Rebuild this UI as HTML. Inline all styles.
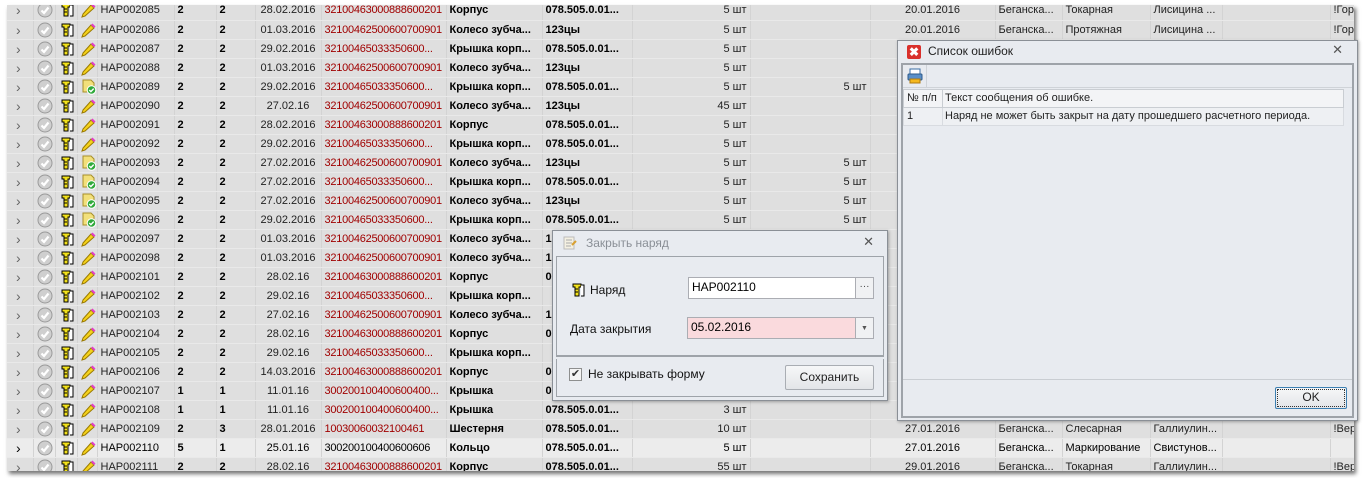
<!DOCTYPE html>
<html><head><meta charset="utf-8">
<style>
*{margin:0;padding:0;box-sizing:border-box}
body{width:1363px;height:478px;background:#fff;overflow:hidden;position:relative;font-family:"Liberation Sans",sans-serif;font-size:11px;color:#222}
#wrap{position:absolute;left:7px;top:5px;width:1347px;height:466px;overflow:hidden;background:#dfdfdf;box-shadow:2px 3px 4px rgba(0,0,0,.55)}
table{position:absolute;top:-4px;left:0;border-collapse:collapse;table-layout:fixed;width:1347px}
td{height:19px;border-right:1px solid #d3d3d3;border-bottom:1px solid #e9e9e9;white-space:nowrap;overflow:hidden;padding:0 3px;line-height:18px}
td.b{font-weight:bold;color:#000}
td.r{color:#a00000;letter-spacing:-0.25px}
td.q{text-align:right}
td.c{text-align:center}
tr.sel td{background:#ececec;color:#000}
svg.i{display:block;margin:0 auto}
.arr{color:#666;font-size:14px;padding-left:9px;line-height:16px}
.dlg{position:absolute;background:#e8ebf0;border:1px solid #8a8f96;box-shadow:1px 1px 3px rgba(0,0,0,.3)}
.btn{position:absolute;border:1px solid #a9adb3;border-radius:2px;background:linear-gradient(#f6f7f8,#e3e5e8);text-align:center;font-size:12px;color:#222}
.inp{position:absolute;border:1px solid #abadb3;background:#fff;font-size:12px;padding-left:3px;line-height:19px;color:#000}
</style></head><body>
<svg width="0" height="0" style="position:absolute">
<defs>
<symbol id="ck" viewBox="0 0 16 16"><circle cx="8" cy="8" r="7" fill="#cfcfcf" stroke="#9a9a9a"/><path d="M4.5 8.5l2.5 2.5 4.5-5.5" stroke="#fff" stroke-width="2.2" fill="none"/></symbol>
<symbol id="tl" viewBox="0 0 16 16"><path d="M3 2h8v3h-2v9h-4v-9h-2z" fill="#f3e21b" stroke="#000" stroke-width="1"/><path d="M11 3h3v11h-3" fill="#fff" stroke="#000"/><path d="M5 7h3M5 10h3" stroke="#000"/></symbol>
<symbol id="pn" viewBox="0 0 16 16"><path d="M2 12l8-9 3 3-9 8-3 1z" fill="#f5d21c" stroke="#9a7a00"/><path d="M10 3l1.5-1.5 3 3-1.5 1.5z" fill="#e33ec8"/></symbol>
<symbol id="gd" viewBox="0 0 16 16"><path d="M2 1h8l3 3v9h-11z" fill="#f2e07a" stroke="#a88f2a"/><circle cx="10.5" cy="11" r="4.3" fill="#2fa93a" stroke="#fff"/><path d="M8.3 11l1.6 1.6 2.8-3" stroke="#fff" stroke-width="1.4" fill="none"/></symbol>
</defs></svg>
<div id="wrap">
<table>
<colgroup><col style="width:26px"><col style="width:22px"><col style="width:22px"><col style="width:20px"><col style="width:77px"><col style="width:42px"><col style="width:39px"><col style="width:66px"><col style="width:125px"><col style="width:96px"><col style="width:90px"><col style="width:118px"><col style="width:120px"><col style="width:125px"><col style="width:67px"><col style="width:88px"><col style="width:72px"><col style="width:108px"><col style="width:24px"></colgroup>
<tbody>
<tr><td class="arr">›</td><td><svg class="i" width="16" height="16"><use href="#ck"/></svg></td><td><svg class="i" width="16" height="16"><use href="#tl"/></svg></td><td><svg class="i" width="16" height="16"><use href="#pn"/></svg></td><td>HAP002085</td><td class="b">2</td><td class="b">2</td><td class="c">28.02.2016</td><td class="r">32100463000888600201</td><td class="b">Корпус</td><td class="b">078.505.0.01...</td><td class="q">5 шт</td><td class="q"></td><td class="c">20.01.2016</td><td>Беганска...</td><td>Токарная</td><td>Лисицина ...</td><td></td><td>!Гор</td></tr>
<tr><td class="arr">›</td><td><svg class="i" width="16" height="16"><use href="#ck"/></svg></td><td><svg class="i" width="16" height="16"><use href="#tl"/></svg></td><td><svg class="i" width="16" height="16"><use href="#pn"/></svg></td><td>HAP002086</td><td class="b">2</td><td class="b">2</td><td class="c">01.03.2016</td><td class="r">32100462500600700901</td><td class="b">Колесо зубча...</td><td class="b">123цы</td><td class="q">5 шт</td><td class="q"></td><td class="c">20.01.2016</td><td>Беганска...</td><td>Протяжная</td><td>Лисицина ...</td><td></td><td>!Гор</td></tr>
<tr><td class="arr">›</td><td><svg class="i" width="16" height="16"><use href="#ck"/></svg></td><td><svg class="i" width="16" height="16"><use href="#tl"/></svg></td><td><svg class="i" width="16" height="16"><use href="#pn"/></svg></td><td>HAP002087</td><td class="b">2</td><td class="b">2</td><td class="c">29.02.2016</td><td class="r">32100465033350600...</td><td class="b">Крышка корп...</td><td class="b">078.505.0.01...</td><td class="q">5 шт</td><td class="q"></td><td></td><td></td><td></td><td></td><td></td><td></td></tr>
<tr><td class="arr">›</td><td><svg class="i" width="16" height="16"><use href="#ck"/></svg></td><td><svg class="i" width="16" height="16"><use href="#tl"/></svg></td><td><svg class="i" width="16" height="16"><use href="#pn"/></svg></td><td>HAP002088</td><td class="b">2</td><td class="b">2</td><td class="c">01.03.2016</td><td class="r">32100462500600700901</td><td class="b">Колесо зубча...</td><td class="b">123цы</td><td class="q">5 шт</td><td class="q"></td><td></td><td></td><td></td><td></td><td></td><td></td></tr>
<tr><td class="arr">›</td><td><svg class="i" width="16" height="16"><use href="#ck"/></svg></td><td><svg class="i" width="16" height="16"><use href="#tl"/></svg></td><td><svg class="i" width="16" height="16"><use href="#gd"/></svg></td><td>HAP002089</td><td class="b">2</td><td class="b">2</td><td class="c">29.02.2016</td><td class="r">32100465033350600...</td><td class="b">Крышка корп...</td><td class="b">078.505.0.01...</td><td class="q">5 шт</td><td class="q">5 шт</td><td></td><td></td><td></td><td></td><td></td><td></td></tr>
<tr><td class="arr">›</td><td><svg class="i" width="16" height="16"><use href="#ck"/></svg></td><td><svg class="i" width="16" height="16"><use href="#tl"/></svg></td><td><svg class="i" width="16" height="16"><use href="#pn"/></svg></td><td>HAP002090</td><td class="b">2</td><td class="b">2</td><td class="c">27.02.16</td><td class="r">32100462500600700901</td><td class="b">Колесо зубча...</td><td class="b">123цы</td><td class="q">45 шт</td><td class="q"></td><td></td><td></td><td></td><td></td><td></td><td></td></tr>
<tr><td class="arr">›</td><td><svg class="i" width="16" height="16"><use href="#ck"/></svg></td><td><svg class="i" width="16" height="16"><use href="#tl"/></svg></td><td><svg class="i" width="16" height="16"><use href="#pn"/></svg></td><td>HAP002091</td><td class="b">2</td><td class="b">2</td><td class="c">28.02.2016</td><td class="r">32100463000888600201</td><td class="b">Корпус</td><td class="b">078.505.0.01...</td><td class="q">5 шт</td><td class="q"></td><td></td><td></td><td></td><td></td><td></td><td></td></tr>
<tr><td class="arr">›</td><td><svg class="i" width="16" height="16"><use href="#ck"/></svg></td><td><svg class="i" width="16" height="16"><use href="#tl"/></svg></td><td><svg class="i" width="16" height="16"><use href="#pn"/></svg></td><td>HAP002092</td><td class="b">2</td><td class="b">2</td><td class="c">29.02.2016</td><td class="r">32100465033350600...</td><td class="b">Крышка корп...</td><td class="b">078.505.0.01...</td><td class="q">5 шт</td><td class="q"></td><td></td><td></td><td></td><td></td><td></td><td></td></tr>
<tr><td class="arr">›</td><td><svg class="i" width="16" height="16"><use href="#ck"/></svg></td><td><svg class="i" width="16" height="16"><use href="#tl"/></svg></td><td><svg class="i" width="16" height="16"><use href="#gd"/></svg></td><td>HAP002093</td><td class="b">2</td><td class="b">2</td><td class="c">27.02.2016</td><td class="r">32100462500600700901</td><td class="b">Колесо зубча...</td><td class="b">123цы</td><td class="q">5 шт</td><td class="q">5 шт</td><td></td><td></td><td></td><td></td><td></td><td></td></tr>
<tr><td class="arr">›</td><td><svg class="i" width="16" height="16"><use href="#ck"/></svg></td><td><svg class="i" width="16" height="16"><use href="#tl"/></svg></td><td><svg class="i" width="16" height="16"><use href="#gd"/></svg></td><td>HAP002094</td><td class="b">2</td><td class="b">2</td><td class="c">27.02.2016</td><td class="r">32100465033350600...</td><td class="b">Крышка корп...</td><td class="b">078.505.0.01...</td><td class="q">5 шт</td><td class="q">5 шт</td><td></td><td></td><td></td><td></td><td></td><td></td></tr>
<tr><td class="arr">›</td><td><svg class="i" width="16" height="16"><use href="#ck"/></svg></td><td><svg class="i" width="16" height="16"><use href="#tl"/></svg></td><td><svg class="i" width="16" height="16"><use href="#gd"/></svg></td><td>HAP002095</td><td class="b">2</td><td class="b">2</td><td class="c">27.02.2016</td><td class="r">32100462500600700901</td><td class="b">Колесо зубча...</td><td class="b">123цы</td><td class="q">5 шт</td><td class="q">5 шт</td><td></td><td></td><td></td><td></td><td></td><td></td></tr>
<tr><td class="arr">›</td><td><svg class="i" width="16" height="16"><use href="#ck"/></svg></td><td><svg class="i" width="16" height="16"><use href="#tl"/></svg></td><td><svg class="i" width="16" height="16"><use href="#gd"/></svg></td><td>HAP002096</td><td class="b">2</td><td class="b">2</td><td class="c">29.02.2016</td><td class="r">32100465033350600...</td><td class="b">Крышка корп...</td><td class="b">078.505.0.01...</td><td class="q">5 шт</td><td class="q">5 шт</td><td></td><td></td><td></td><td></td><td></td><td></td></tr>
<tr><td class="arr">›</td><td><svg class="i" width="16" height="16"><use href="#ck"/></svg></td><td><svg class="i" width="16" height="16"><use href="#tl"/></svg></td><td><svg class="i" width="16" height="16"><use href="#pn"/></svg></td><td>HAP002097</td><td class="b">2</td><td class="b">2</td><td class="c">01.03.2016</td><td class="r">32100462500600700901</td><td class="b">Колесо зубча...</td><td class="b">123цы</td><td class="q">5 шт</td><td class="q"></td><td></td><td></td><td></td><td></td><td></td><td></td></tr>
<tr><td class="arr">›</td><td><svg class="i" width="16" height="16"><use href="#ck"/></svg></td><td><svg class="i" width="16" height="16"><use href="#tl"/></svg></td><td><svg class="i" width="16" height="16"><use href="#pn"/></svg></td><td>HAP002098</td><td class="b">2</td><td class="b">2</td><td class="c">01.03.2016</td><td class="r">32100462500600700901</td><td class="b">Колесо зубча...</td><td class="b">123цы</td><td class="q">5 шт</td><td class="q"></td><td></td><td></td><td></td><td></td><td></td><td></td></tr>
<tr><td class="arr">›</td><td><svg class="i" width="16" height="16"><use href="#ck"/></svg></td><td><svg class="i" width="16" height="16"><use href="#tl"/></svg></td><td><svg class="i" width="16" height="16"><use href="#pn"/></svg></td><td>HAP002101</td><td class="b">2</td><td class="b">2</td><td class="c">28.02.16</td><td class="r">32100463000888600201</td><td class="b">Корпус</td><td class="b">0</td><td class="q"></td><td class="q"></td><td></td><td></td><td></td><td></td><td></td><td></td></tr>
<tr><td class="arr">›</td><td><svg class="i" width="16" height="16"><use href="#ck"/></svg></td><td><svg class="i" width="16" height="16"><use href="#tl"/></svg></td><td><svg class="i" width="16" height="16"><use href="#pn"/></svg></td><td>HAP002102</td><td class="b">2</td><td class="b">2</td><td class="c">29.02.16</td><td class="r">32100465033350600...</td><td class="b">Крышка корп...</td><td class="b"></td><td class="q"></td><td class="q"></td><td></td><td></td><td></td><td></td><td></td><td></td></tr>
<tr><td class="arr">›</td><td><svg class="i" width="16" height="16"><use href="#ck"/></svg></td><td><svg class="i" width="16" height="16"><use href="#tl"/></svg></td><td><svg class="i" width="16" height="16"><use href="#pn"/></svg></td><td>HAP002103</td><td class="b">2</td><td class="b">2</td><td class="c">27.02.16</td><td class="r">32100462500600700901</td><td class="b">Колесо зубча...</td><td class="b">1</td><td class="q"></td><td class="q"></td><td></td><td></td><td></td><td></td><td></td><td></td></tr>
<tr><td class="arr">›</td><td><svg class="i" width="16" height="16"><use href="#ck"/></svg></td><td><svg class="i" width="16" height="16"><use href="#tl"/></svg></td><td><svg class="i" width="16" height="16"><use href="#pn"/></svg></td><td>HAP002104</td><td class="b">2</td><td class="b">2</td><td class="c">28.02.16</td><td class="r">32100463000888600201</td><td class="b">Корпус</td><td class="b">0</td><td class="q"></td><td class="q"></td><td></td><td></td><td></td><td></td><td></td><td></td></tr>
<tr><td class="arr">›</td><td><svg class="i" width="16" height="16"><use href="#ck"/></svg></td><td><svg class="i" width="16" height="16"><use href="#tl"/></svg></td><td><svg class="i" width="16" height="16"><use href="#pn"/></svg></td><td>HAP002105</td><td class="b">2</td><td class="b">2</td><td class="c">29.02.16</td><td class="r">32100465033350600...</td><td class="b">Крышка корп...</td><td class="b"></td><td class="q"></td><td class="q"></td><td></td><td></td><td></td><td></td><td></td><td></td></tr>
<tr><td class="arr">›</td><td><svg class="i" width="16" height="16"><use href="#ck"/></svg></td><td><svg class="i" width="16" height="16"><use href="#tl"/></svg></td><td><svg class="i" width="16" height="16"><use href="#pn"/></svg></td><td>HAP002106</td><td class="b">2</td><td class="b">2</td><td class="c">14.03.2016</td><td class="r">32100463000888600201</td><td class="b">Корпус</td><td class="b">0</td><td class="q"></td><td class="q"></td><td></td><td></td><td></td><td></td><td></td><td></td></tr>
<tr><td class="arr">›</td><td><svg class="i" width="16" height="16"><use href="#ck"/></svg></td><td><svg class="i" width="16" height="16"><use href="#tl"/></svg></td><td><svg class="i" width="16" height="16"><use href="#pn"/></svg></td><td>HAP002107</td><td class="b">1</td><td class="b">1</td><td class="c">11.01.16</td><td class="r">300200100400600400...</td><td class="b">Крышка</td><td class="b">0</td><td class="q"></td><td class="q"></td><td></td><td></td><td></td><td></td><td></td><td></td></tr>
<tr><td class="arr">›</td><td><svg class="i" width="16" height="16"><use href="#ck"/></svg></td><td><svg class="i" width="16" height="16"><use href="#tl"/></svg></td><td><svg class="i" width="16" height="16"><use href="#pn"/></svg></td><td>HAP002108</td><td class="b">1</td><td class="b">1</td><td class="c">11.01.16</td><td class="r">300200100400600400...</td><td class="b">Крышка</td><td class="b">078.505.0.01...</td><td class="q">3 шт</td><td class="q"></td><td></td><td></td><td></td><td></td><td></td><td></td></tr>
<tr><td class="arr">›</td><td><svg class="i" width="16" height="16"><use href="#ck"/></svg></td><td><svg class="i" width="16" height="16"><use href="#tl"/></svg></td><td><svg class="i" width="16" height="16"><use href="#pn"/></svg></td><td>HAP002109</td><td class="b">2</td><td class="b">3</td><td class="c">28.01.2016</td><td class="r">10030060032100461</td><td class="b">Шестерня</td><td class="b">078.505.0.01...</td><td class="q">10 шт</td><td class="q"></td><td class="c">27.01.2016</td><td>Беганска...</td><td>Слесарная</td><td>Галлиулин...</td><td></td><td>!Вер</td></tr>
<tr class="sel"><td class="arr">›</td><td><svg class="i" width="16" height="16"><use href="#ck"/></svg></td><td><svg class="i" width="16" height="16"><use href="#tl"/></svg></td><td><svg class="i" width="16" height="16"><use href="#pn"/></svg></td><td>HAP002110</td><td class="b">5</td><td class="b">1</td><td class="c">25.01.16</td><td style="letter-spacing:-0.25px">300200100400600606</td><td class="b">Кольцо</td><td class="b">078.505.0.01...</td><td class="q">5 шт</td><td class="q"></td><td class="c">27.01.2016</td><td>Беганска...</td><td>Маркирование</td><td>Свистунов...</td><td></td><td></td></tr>
<tr><td class="arr">›</td><td><svg class="i" width="16" height="16"><use href="#ck"/></svg></td><td><svg class="i" width="16" height="16"><use href="#tl"/></svg></td><td><svg class="i" width="16" height="16"><use href="#pn"/></svg></td><td>HAP002111</td><td class="b">2</td><td class="b">2</td><td class="c">28.02.16</td><td class="r">32100463000888600201</td><td class="b">Корпус</td><td class="b">078.505.0.01...</td><td class="q">55 шт</td><td class="q"></td><td class="c">29.01.2016</td><td>Беганска...</td><td>Токарная</td><td>Галлиулин...</td><td></td><td>!Вер</td></tr>
</tbody></table>
</div>

<div class="dlg" style="left:897px;top:40px;width:461px;height:381px;background:#e8ebf0">
  <div style="position:absolute;left:9px;top:4px;width:14px;height:14px;background:#d9302c;border-radius:2px;color:#fff;font-size:12px;line-height:14px;text-align:center;font-weight:bold">✖</div>
  <div style="position:absolute;left:30px;top:3px;font-size:12px;color:#222">Список ошибок</div>
  <div style="position:absolute;right:14px;top:1px;font-size:13px;color:#555">✕</div>
  <div style="position:absolute;left:3px;top:22px;width:453px;height:355px;border:2px solid #9ea3a9;background:#e8ebf0">
    <div style="position:absolute;left:0;top:0;right:0;height:23px;border-bottom:1px solid #cfd3d8">
      <svg style="position:absolute;left:4px;top:3px" width="16" height="16" viewBox="0 0 16 16"><rect x="3" y="1" width="10" height="5" fill="#fff" stroke="#3a6ea5"/><rect x="1" y="6" width="14" height="6" rx="1" fill="#5a8fc8" stroke="#2d5a8a"/><rect x="3" y="11" width="10" height="4" fill="#f5b81d" stroke="#b07a10"/></svg>
      <div style="position:absolute;left:23px;top:0;width:1px;height:23px;background:#cfd3d8"></div>
    </div>
    <div style="position:absolute;left:0;top:24px;width:441px;height:19px;background:#f3f4f6;border:1px solid #c9cdd2;font-size:11px;line-height:17px">
      <span style="position:absolute;left:3px">№ п/п</span><span style="position:absolute;left:38px;top:0;height:17px;border-left:1px solid #c9cdd2"></span><span style="position:absolute;left:41px">Текст сообщения об ошибке.</span>
    </div>
    <div style="position:absolute;left:0;top:43px;width:441px;height:18px;background:#eef0f3;border:1px solid #d8dbe0;border-top:0;font-size:11px;line-height:17px">
      <span style="position:absolute;left:3px">1</span><span style="position:absolute;left:38px;top:0;height:17px;border-left:1px solid #d8dbe0"></span><span style="position:absolute;left:41px">Наряд не может быть закрыт на дату прошедшего расчетного периода.</span>
    </div>
    <div style="position:absolute;left:0;top:314px;right:0;border-top:1px solid #c9cdd2"></div>
    <div class="btn" style="left:372px;top:322px;width:72px;height:22px;line-height:19px;border:1px solid #3c7fb1;outline:1px dotted #333;outline-offset:-3px">OK</div>
  </div>
</div>

<div class="dlg" style="left:552px;top:230px;width:336px;height:171px;background:#e8ebf0">
  <svg style="position:absolute;left:10px;top:5px" width="14" height="14" viewBox="0 0 14 14"><rect x="1" y="1" width="10" height="12" fill="#f4f0e2" stroke="#bbb"/><path d="M3 4h6M3 7h6M3 10h5" stroke="#aaa"/><path d="M9 9l4-4" stroke="#d8a030" stroke-width="2"/></svg>
  <div style="position:absolute;left:33px;top:5px;font-size:12px;color:#8a8f96">Закрыть наряд</div>
  <div style="position:absolute;right:13px;top:3px;font-size:13px;color:#555">✕</div>
  <div style="position:absolute;left:3px;top:25px;width:328px;height:101px;border:1px solid #9ea3a9;border-bottom:2px solid #9ea3a9;background:#e8ebf0">
    <svg style="position:absolute;left:13px;top:25px" width="16" height="16"><use href="#tl"/></svg>
    <div style="position:absolute;left:33px;top:26px;font-size:12px;color:#111">Наряд</div>
    <div class="inp" style="left:131px;top:20px;width:168px;height:22px">HAP002110</div>
    <div style="position:absolute;left:299px;top:20px;width:18px;height:22px;border:1px solid #abadb3;border-left:0;background:#f0f1f3;font-size:10px;text-align:center;line-height:18px;color:#444">···</div>
    <div style="position:absolute;left:13px;top:65px;font-size:12px;color:#111">Дата закрытия</div>
    <div class="inp" style="left:130px;top:60px;width:169px;height:22px;background:#fadadd">05.02.2016</div>
    <div style="position:absolute;left:299px;top:60px;width:18px;height:22px;border:1px solid #abadb3;border-left:0;background:#f0f1f3;font-size:7px;text-align:center;line-height:21px;color:#555">▼</div>
  </div>
  <div style="position:absolute;left:3px;top:128px;width:328px;height:38px;border:1px solid #9ea3a9;border-top:0;background:#e8ebf0">
    <div style="position:absolute;left:12px;top:9px;width:13px;height:13px;border:1px solid #8e8f8f;background:#f4f4f4;font-size:11px;line-height:11px;text-align:center;color:#333">✔</div>
    <div style="position:absolute;left:31px;top:8px;font-size:12px;color:#111">Не закрывать форму</div>
    <div class="btn" style="left:228px;top:6px;width:89px;height:25px;line-height:23px">Сохранить</div>
  </div>
</div>
</body></html>
